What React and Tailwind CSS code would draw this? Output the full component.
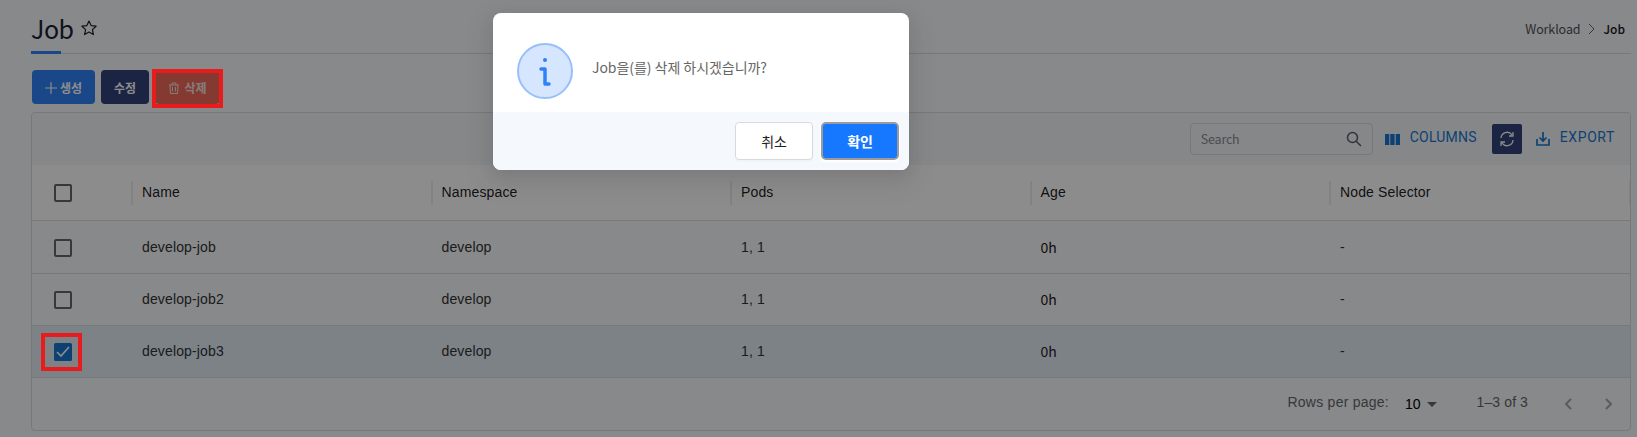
const Box = ({ on }) => (
  <svg className="size-6" viewBox="0 0 24 24">
    {on ? (
      <>
        <rect x="3" y="3" width="18" height="18" rx="1.5" fill="#1976d2" />
        <path d="M6 12l4 4 8-9" fill="none" stroke="#fff" strokeWidth="1.7" />
      </>
    ) : (
      <rect x="4" y="4" width="16" height="16" rx="1" fill="none" stroke="#666" strokeWidth="2" />
    )}
  </svg>
);

const columns = ["Name", "Namespace", "Pods", "Age", "Node Selector"];
const rows = [
  { name: "develop-job", on: false },
  { name: "develop-job2", on: false },
  { name: "develop-job3", on: true },
];
const kr = "font-['Noto_Sans_CJK_KR',sans-serif]";

function Header() {
  return (
    <header className="flex h-[54px] border-b border-[#d9dadd]">
      <div className="relative flex items-center gap-2 pt-[2px]">
        <h1 className="-ml-px text-[25px] leading-8 font-normal tracking-[-0.5px] text-[#1a2138]">Job</h1>
        <svg className="mt-px size-4" viewBox="0 0 16 16" fill="none" stroke="#222" strokeWidth="1.2" strokeLinejoin="round">
          <path d="M8 1l2.100 4.600 5 .6-3.700 3.400 1 5L8 12.100l-4.400 2.500 1-5L.9 6.200l5-.6z" />
        </svg>
        <span className="absolute -bottom-px left-[-1px] h-[3px] w-[30px] bg-[#2f81f7]" />
      </div>
      <nav className="ml-auto flex items-center gap-2 pt-[5px] pr-[6px] text-[12px]">
        <span className="text-[12.500px] tracking-[-0.100px] text-[#505154]">Workload</span>
        <svg className="h-3 w-[7px]" viewBox="0 0 7 12" fill="none" stroke="#666"><path d="M1 1l5 5-5 5" /></svg>
        <span className="font-medium text-[#15171c]">Job</span>
      </nav>
    </header>
  );
}

function Actions() {
  return (
    <div className="flex gap-[6px] pt-4 text-[12px] font-bold text-white">
      <button className="flex h-[34px] w-[63px] items-center justify-center gap-[3px] rounded-[4px] bg-[#2f81f7] pt-px">
        <svg className="size-3" viewBox="0 0 12 12" stroke="#fff" strokeWidth="1.2"><path d="M6 0v12M0 6h12" /></svg>
        생성
      </button>
      <button className="h-[34px] w-12 rounded-[4px] bg-[#33437a] pt-px">수정</button>
      <button className="flex h-[34px] w-[65px] items-center justify-center gap-1 rounded-[4px] bg-[#f06b59] pt-px text-[#f3e4e2]">
        <svg className="size-3" viewBox="0 0 12 12" fill="none" stroke="currentColor"><path d="M1 3h10M4 3V1h4v2M2 3l.5 8.500h7L10 3M4.500 5v4.500M7.500 5v4.500" /></svg>
        삭제
      </button>
    </div>
  );
}

function Toolbar() {
  return (
    <div className="flex h-[52px] shrink-0 items-center bg-[#f4f6f9] pr-[15px] font-['Roboto',sans-serif] text-[14px] text-[#1976d2]">
      <div className={`ml-auto flex h-8 w-[183px] items-center justify-between rounded border border-[#d9dadd] px-[10px] text-[12.500px] tracking-[-0.200px] text-[#8b8c90] ${kr}`}>
        Search
        <svg className="size-4" viewBox="0 0 16 16" fill="none" stroke="#5c5d66" strokeWidth="1.500"><circle cx="6.500" cy="6.500" r="5" /><path d="M10.200 10.200L15 15" /></svg>
      </div>
      <svg className="ml-3 h-[11px] w-[15px]" viewBox="0 0 15 11" fill="currentColor"><path d="M0 0h4.300v11H0zM5.300 0h4.300v11H5.300zM10.700 0H15v11h-4.300z" /></svg>
      <span className="ml-[10px] w-[67px] pb-[3px] tracking-[0.200px]">COLUMNS</span>
      <span className="ml-[15px] flex size-[30px] items-center justify-center rounded-[2px] bg-[#33437a]">
        <svg className="size-4" viewBox="0 0 16 16" fill="none" stroke="#fff" strokeWidth="1.300"><path d="M2 7a6 6 0 0 1 11-3M14 1v4h-4M14 9a6 6 0 0 1-11 3M2 15v-4h4" /></svg>
      </span>
      <svg className="ml-[14px] size-[14px]" viewBox="0 0 14 14" fill="none" stroke="currentColor" strokeWidth="1.700"><path d="M7 0v9M3.500 5.500L7 9l3.500-3.500M1 7v6h12V7" /></svg>
      <span className="ml-[10px] pb-[3px] tracking-[0.600px]">EXPORT</span>
    </div>
  );
}

function Table() {
  return (
    <div className="font-['Liberation_Sans',Arial,sans-serif] text-[14px] tracking-[0.140px] text-[#323335]">
      <div className="flex h-14 items-center border-b border-[#d9dadd] bg-white text-black/90">
        <div className="w-[99px] shrink-0 pl-[19px]"><Box /></div>
        {columns.map((c) => (
          <div key={c} className="flex h-6 w-[299.500px] shrink-0 items-center border-l-2 border-[#ededed] pl-[9px]">{c}</div>
        ))}
        <div className="h-6 w-[2px] shrink-0 bg-[#ededed]" />
      </div>
      {rows.map((r, i) => (
        <div key={r.name} className={`flex items-center border-b border-[#d9dadd] ${i ? "h-[52px]" : "h-[53px]"} ${r.on ? "bg-[#e3edf4]" : ""}`}>
          <div className="w-[99px] shrink-0 pt-px pl-[19px]"><Box on={r.on} /></div>
          {[r.name, "develop", "1, 1", "0h", "-"].map((v, j) => (
            <div key={j} className={`w-[299.500px] shrink-0 pl-[11px] ${j === 3 ? `tracking-normal text-[#222] ${kr}` : ""}`}>{v}</div>
          ))}
        </div>
      ))}
    </div>
  );
}

function Pagination() {
  return (
    <div className="flex h-[52px] items-center pr-[17px] font-['Liberation_Sans',Arial,sans-serif] text-[14px] tracking-[0.250px] text-[#66676a]">
      <span className="ml-auto pb-1">Rows per page:</span>
      <span className="ml-[16px] tracking-normal text-black">10</span>
      <svg className="ml-[6px] h-[5px] w-[10px]" viewBox="0 0 10 5"><path d="M0 0h10L5 5z" fill="#666" /></svg>
      <span className="ml-10 pb-1 tracking-[0.100px]">1–3 of 3</span>
      <svg className="ml-[36px] h-3 w-2" viewBox="0 0 8 12" fill="none" stroke="#a6a7aa" strokeWidth="2"><path d="M7 1L2 6l5 5" /></svg>
      <svg className="ml-[33px] h-3 w-2" viewBox="0 0 8 12" fill="none" stroke="#a6a7aa" strokeWidth="2"><path d="M1 1l5 5-5 5" /></svg>
    </div>
  );
}

function Dialog() {
  return (
    <div className="absolute top-[13px] left-[493px] flex h-[157px] w-[416px] flex-col overflow-hidden rounded-lg bg-white shadow-[0_6px_16px_rgba(0,0,0,0.08),0_9px_28px_8px_rgba(0,0,0,0.05)]">
      <div className="flex h-[99px] pt-[30px] pl-6">
        <svg className="size-14" viewBox="0 0 56 56" fill="none">
          <circle cx="28" cy="28" r="27" fill="#d5e6fe" stroke="#97c0fb" strokeWidth="2" />
          <circle cx="28" cy="17" r="2" fill="#2f81f7" />
          <path d="M24 26h4v15h4" stroke="#2f81f7" strokeWidth="3.500" strokeLinecap="round" strokeLinejoin="round" />
        </svg>
        <p className="pt-[12px] pl-[19px] text-[14px] leading-6 tracking-[-0.050px] text-[#666]">Job을(를) 삭제 하시겠습니까?</p>
      </div>
      <div className="flex flex-1 justify-end gap-2 bg-[#f5f8fd] pt-[10px] pr-[10px] text-[14px] tracking-[-0.200px]">
        <button className="h-[38px] w-[78px] rounded border border-[#d9d9d9] bg-white pt-px text-[#222] shadow-[0_2px_0_rgba(0,0,0,0.02)]">취소</button>
        <button className="h-[38px] w-[78px] rounded-[5px] border-2 border-[#9b9b9b] bg-[#1677ff] pt-px font-bold text-white shadow-[0_1px_0_1px_#fff]">확인</button>
      </div>
    </div>
  );
}

export default function App() {
  return (
    <div className={`relative h-[437px] w-[1637px] overflow-hidden bg-[#f8f9fb] ${kr}`}>
      <main className="pr-[6px] pl-8">
        <Header />
        <Actions />
        <section className="mt-2 -ml-px flex h-[319px] flex-col overflow-hidden rounded border border-[#d9dadd]">
          <Toolbar />
          <Table />
          <Pagination />
        </section>
      </main>
      <div className="absolute inset-0 bg-black/45" />
      <Dialog />
      <div className="absolute top-[69px] left-[152px] h-[39px] w-[71px] border-4 border-[#e81c1c]" />
      <div className="absolute top-[333px] left-[41px] h-[38px] w-[41px] border-4 border-[#e81c1c]" />
    </div>
  );
}
